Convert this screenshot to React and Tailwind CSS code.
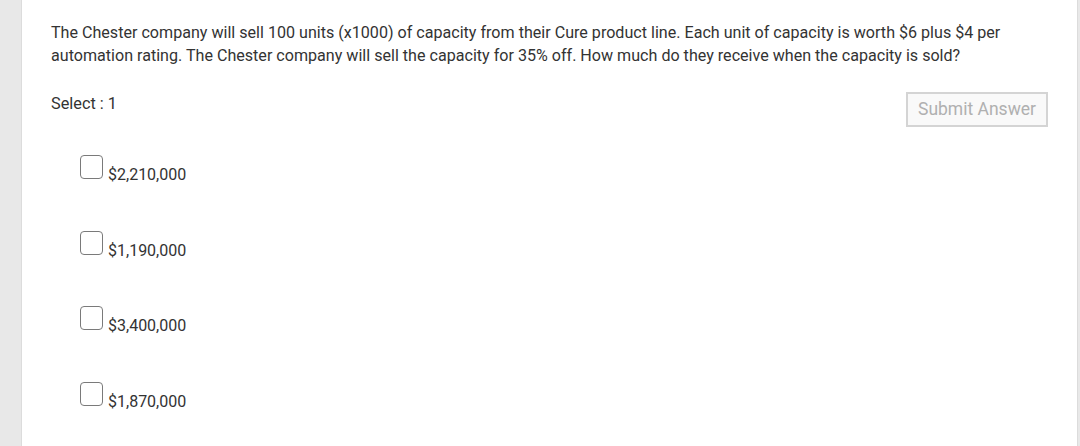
export default function App() {
  const opts = ["$2,210,000", "$1,190,000", "$3,400,000", "$1,870,000"];
  return (
    <div className="w-[1080px] h-[446px] bg-[#e8e8e8] flex overflow-hidden" style={{ fontFamily: "Roboto, 'Liberation Sans', sans-serif" }}>
      <div className="ml-[21px] w-[1057px] h-full bg-white border-l border-r border-[#dcdcdc] pl-[29px] pr-[29px] pt-[21px]">
        <p className="text-[16.1px] leading-[23px] text-[#333333] w-[990px]">
          The Chester company will sell 100 units (x1000) of capacity from their Cure product line. Each unit of capacity is worth $6 plus $4 per automation rating. The Chester company will sell the capacity for 35% off. How much do they receive when the capacity is sold?
        </p>
        <div className="flex justify-between items-start mt-[25px]">
          <span className="text-[16.3px] leading-[20px] text-[#333333] mt-[2px]">Select : 1</span>
          <button className="h-[35px] px-[10px] border-2 border-[#d4d4d4] bg-[#f9f9f9] text-[17.5px] text-[#b0b0b0] leading-none">
            Submit Answer
          </button>
        </div>
        <div className="flex flex-col ml-[29px] mt-[28px]">
          {opts.map((o) => (
            <div key={o} className="flex items-start gap-[5px] h-[75.6px]">
              <span className="block w-[23px] h-[24px] rounded-[4px] border-[1.5px] border-[#7a7a7a] bg-white" />
              <span className="text-[16px] leading-[20px] text-[#333333] mt-[10px]">{o}</span>
            </div>
          ))}
        </div>
      </div>
    </div>
  );
}
